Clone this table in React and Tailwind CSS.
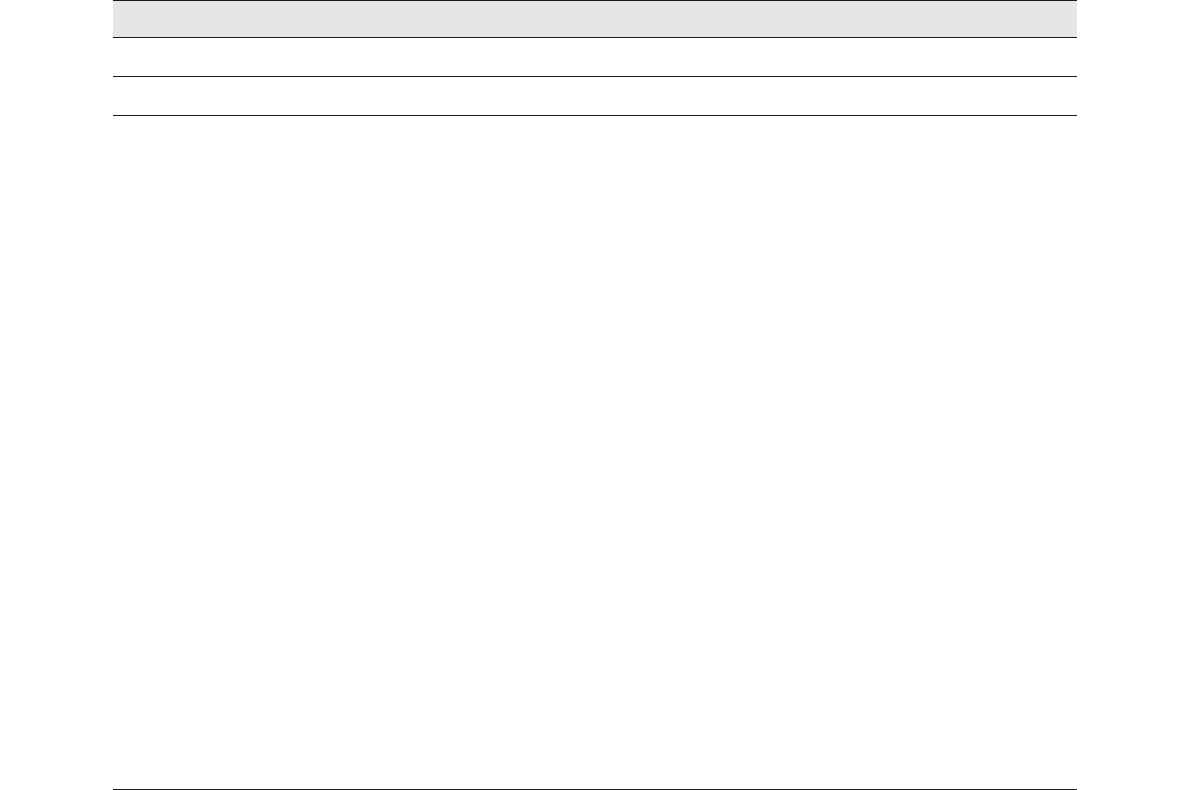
const rows = [{ id: 1 }, { id: 2 }];

const App = () => {
  return (
    <div className="h-[790px] bg-white font-['Liberation_Sans',sans-serif]">
      <div className="mx-auto flex h-full w-[964px] flex-col border-b border-[#1a1a1a]">
        <div className="h-[38px] border-t border-b border-[#1a1a1a] bg-[#e6e6e6]" />
        {rows.map((row) => (
          <div key={row.id} className="h-[39px] border-b border-[#1a1a1a]" />
        ))}
        <div className="flex-1" />
      </div>
    </div>
  );
};

export default App;
